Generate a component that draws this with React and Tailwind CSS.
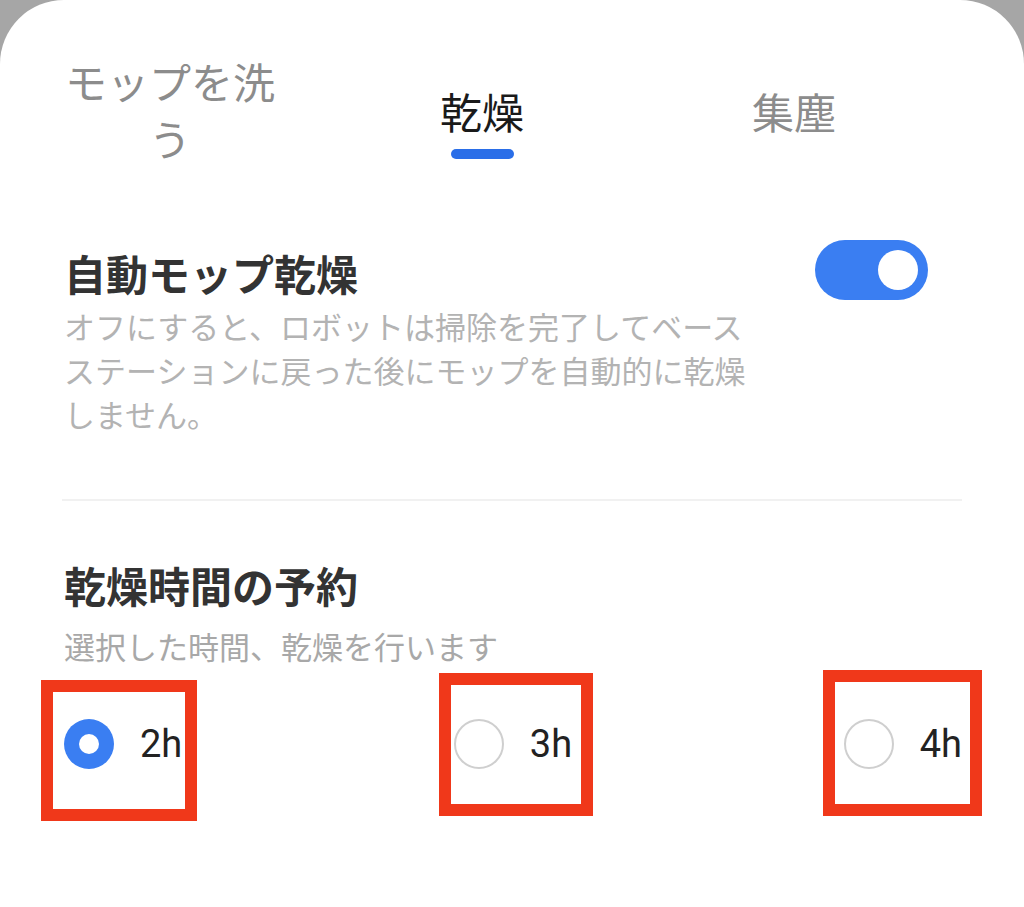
const OPTIONS = [
  { label: "2h", selected: true, box: "-left-[23px] -top-[39px] w-[156px] h-[141px]" },
  { label: "3h", selected: false, box: "-left-[15px] -top-[46px] w-[154px] h-[143px]" },
  { label: "4h", selected: false, box: "-left-[21px] -top-[49px] w-[159px] h-[146px]" },
];

function Radio({ label, selected, box }) {
  return (
    <div className="relative flex items-center gap-[26px]">
      {selected ? (
        <span className="flex h-[50px] w-[50px] items-center justify-center rounded-full bg-[#3a7ef2]">
          <span className="h-[20px] w-[20px] rounded-full bg-white" />
        </span>
      ) : (
        <span className="h-[50px] w-[50px] rounded-full border-2 border-[#cfcfcf] bg-white" />
      )}
      <span className="font-['Roboto',sans-serif] text-[38px] leading-[50px] text-[#222]">{label}</span>
      <span className={`pointer-events-none absolute border-[12px] border-[#f0381a] ${box}`} />
    </div>
  );
}

export default function App() {
  return (
    <div className="h-[907px] w-full bg-[#a6a6a6] font-['Noto_Sans_CJK_JP','Noto_Sans',sans-serif]">
      <div className="h-full rounded-t-[64px] bg-white">
        <nav className="ml-[14px] grid w-[936px] grid-cols-3 items-start pt-[52px]">
          <div className="flex justify-center">
            <span className="w-[220px] text-center text-[42px] leading-[57px] text-[#8c8c8c]">モップを洗う</span>
          </div>
          <div className="flex flex-col items-center pt-[30px]">
            <span className="text-[42px] leading-[57px] text-[#1a1a1a]">乾燥</span>
            <span className="mt-[10px] h-[10px] w-[63px] rounded-full bg-[#2a6ee8]" />
          </div>
          <div className="flex justify-center pt-[30px]">
            <span className="text-[42px] leading-[57px] text-[#8c8c8c]">集塵</span>
          </div>
        </nav>

        <div className="px-[62px]">
          <section className="mt-[74px] flex items-start justify-between">
            <div className="pl-[2px]">
              <h2 className="mt-[4px] text-[42px] font-bold leading-[57px] text-[#333]">自動モップ乾燥</h2>
              <p className="mt-[3px] w-[695px] text-[31px] leading-[44px] text-[#b3b3b3]">
                オフにすると、ロボットは掃除を完了してベースステーションに戻った後にモップを自動的に乾燥しません。
              </p>
            </div>
            <div className="mr-[34px] flex h-[60px] w-[113px] items-center justify-end rounded-full bg-[#3a7ef2] pr-[10px]">
              <span className="h-[40px] w-[40px] rounded-full bg-white" />
            </div>
          </section>

          <div className="mt-[63px] h-[2px] bg-[#f1f1f1]" />

          <section className="pl-[2px]">
            <h2 className="mt-[55px] text-[42px] font-bold leading-[57px] text-[#333]">乾燥時間の予約</h2>
            <p className="mt-[11px] text-[31px] leading-[44px] text-[#a8a8a8]">選択した時間、乾燥を行います</p>
            <div className="mt-[51px] flex justify-between">
              {OPTIONS.map((o) => (
                <Radio key={o.label} {...o} />
              ))}
            </div>
          </section>
        </div>
      </div>
    </div>
  );
}
